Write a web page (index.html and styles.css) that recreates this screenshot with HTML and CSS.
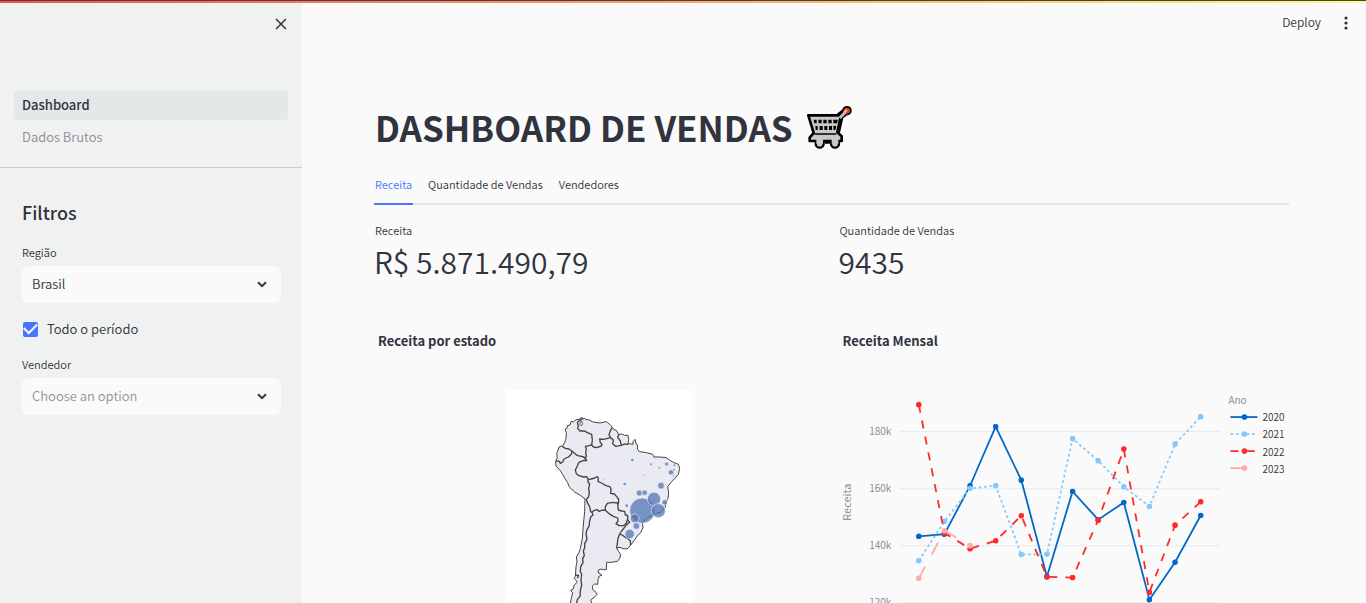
FILE: index.html
```html
<!DOCTYPE html>
<html lang="pt-BR">
<head>
<meta charset="utf-8">
<meta name="viewport" content="width=device-width, initial-scale=1">
<title>Dashboard de Vendas</title>
<link rel="stylesheet" href="styles.css">
</head>
<body>
<div class="decoration"></div>
<div class="app">
  <aside class="sidebar">
    <div class="sidebar-head">
      <button class="icon-button" type="button" aria-label="Fechar">
        <svg width="12" height="12" viewBox="0 0 12 12"><path d="M1 1l10 10M11 1L1 11" stroke="#31333f" stroke-width="1.5" fill="none"/></svg>
      </button>
    </div>
    <nav class="pages">
      <a class="page page-active" href="#dashboard">Dashboard</a>
      <a class="page" href="#dados">Dados Brutos</a>
    </nav>
    <section class="filters">
      <h2 class="filters-title">Filtros</h2>
      <label class="field-label" for="regiao">Região</label>
      <div class="select-box">
        <select id="regiao" class="select"><option>Brasil</option></select>
        <svg class="chevron" width="10" height="7" viewBox="0 0 10 7"><path d="M1 1.2l4 4 4-4" stroke="#31333f" stroke-width="2" fill="none"/></svg>
      </div>
      <label class="check"><input class="check-input" type="checkbox" checked><span>Todo o período</span></label>
      <label class="field-label" for="vendedor">Vendedor</label>
      <div class="select-box">
        <select id="vendedor" class="select select-empty"><option>Choose an option</option></select>
        <svg class="chevron" width="10" height="7" viewBox="0 0 10 7"><path d="M1 1.2l4 4 4-4" stroke="#31333f" stroke-width="2" fill="none"/></svg>
      </div>
    </section>
  </aside>

  <div class="content">
    <header class="toolbar">
      <button class="deploy" type="button">Deploy</button>
      <button class="icon-button" type="button" aria-label="Menu">
        <svg width="4" height="14" viewBox="0 0 4 14" fill="#31333f"><circle cx="2" cy="2" r="1.6"/><circle cx="2" cy="7" r="1.6"/><circle cx="2" cy="12" r="1.6"/></svg>
      </button>
    </header>
    <main class="main">
      <h1 class="title"><span>DASHBOARD DE VENDAS</span>
        <svg class="cart" width="46" height="44" viewBox="1344 50 138 132" aria-hidden="true">
          <g stroke="#000" stroke-linejoin="round" stroke-linecap="round">
            <path d="M1461 69L1443 83L1431 137" stroke-width="22" fill="none"/>
            <circle cx="1464" cy="67" r="14" fill="#000" stroke="none"/>
            <circle cx="1382" cy="166" r="12" fill="#c9c9c9" stroke-width="7"/>
            <circle cx="1428" cy="166" r="12" fill="#c9c9c9" stroke-width="7"/>
            <path d="M1348 81H1446L1435 132L1448 144V158H1352V148L1364 134Z" fill="#c9c9c9" stroke-width="8"/>
            <path d="M1368 137H1430" stroke-width="5"/>
          </g>
          <path d="M1372 150h20v16h-20zM1418 150h20v16h-20z" fill="#c9c9c9"/>
          <path d="M1395 158h20l-3 8h-14z" fill="#000"/>
          <path d="M1442 89L1461 70" stroke="#bdbdbd" stroke-width="9"/>
          <circle cx="1464" cy="67" r="9" fill="#f03a17"/>
          <path d="M1457 76l9-9-6-5-8 9z" fill="#e7b5ab"/>
          <g fill="#000">
            <path d="M1364 94h9v11h-7zM1378 94h10v11h-9zM1393 94h10v11h-10zM1408 94h10v11h-10zM1423 94h14l-3 11h-11z"/>
            <path d="M1369 113h7v12h-6zM1382 113h9v12h-9zM1396 113h9v12h-9zM1410 113h9v12h-9zM1423 113h9l-3 12h-6z"/>
          </g>
        </svg>
      </h1>
      <div class="tabs" role="tablist">
        <button class="tab tab-active" role="tab" aria-selected="true" type="button">Receita</button>
        <button class="tab" role="tab" type="button">Quantidade de Vendas</button>
        <button class="tab" role="tab" type="button">Vendedores</button>
      </div>
      <div class="columns">
        <section class="column">
          <div class="metric-label">Receita</div>
          <div class="metric-value">R$ 5.871.490,79</div>
          <h3 class="chart-title">Receita por estado</h3>
          <svg class="map" viewBox="18 15 558 810" role="img" aria-label="Receita por estado">
            <path d="M18 15h558v810H18z" fill="#fff"/>
            <g stroke="#444" stroke-linejoin="round">
              <path fill="#eaeaf2" stroke-width="3" d="M245 96L240 102L228 104L221 110L213 110L210 120L202 122L201 130L195 133L199 142L198 160L194 173L188 182L177 186L174 196L170 206L172 218L167 229L168 243L181 257L188 268L195 281L203 293L208 306L224 321L241 331L255 342L254 380L250 420L247 460L241 490L237 503L229 516L231 530L228 545L226 575L222 580L229 587L231 592L223 600L219 612L212 616L218 624L214 640L211 654L205 700L215 760L250 780L245 720L275 654L272 645L284 636L291 628L288 622L278 614L277 603L284 597L293 598L294 584L298 573L306 571L300 566L295 564L295 555L303 552L311 554L319 554L320 532L334 532L352 529L360 519L362 508L356 500L350 489L360 487L372 492L384 490L392 480L405 463L413 451L422 443L429 428L427 414L437 402L450 394L460 387L483 382L496 366L498 350L504 340L506 325L503 305L515 290L524 281L535 268L539 250L535 238L520 232L508 225L499 218L480 216L462 216L458 208L440 203L418 200L412 192L413 180L409 178L405 163L399 170L399 178L388 176L384 178L386 163L384 151L374 151L365 147L356 149L350 137L341 133L338 128L331 120L322 112L318 110L300 114L285 112L277 110L265 104L257 104L253 99L248 104Z"/>
              <g fill="none" stroke-width="4">
                <path d="M245 101L236 108L232 113L235 124L233 130L240 138L254 138L262 143L275 148L277 165L275 180L267 182L256 184L259 192L257 204L259 213L256 224"/>
                <path d="M187 184L196 190L207 192L216 198L227 208L234 212L252 216L260 227L251 226L237 232L232 243L226 255L229 266L237 272L250 276L260 275L265 284L263 290L269 297L266 310L268 325L265 337L259 342"/>
                <path d="M216 198L214 208L205 216L192 222L188 231L181 235L178 229L168 228"/>
                <path d="M265 284L274 282L284 279L292 275L295 280L294 289L304 294L318 302L329 305L333 311L332 325L343 327L352 337L356 344L355 358"/>
                <path d="M259 342L262 353L269 365L272 380L276 382L283 376L291 374L298 379L306 375L316 376L316 365L322 355L337 352L353 354L355 375L365 378L374 379L376 390L383 391L383 404L389 412L380 419L365 438L359 447"/>
                <path d="M316 376L326 385L340 394L353 399L354 408L348 416L357 422L370 422L379 415L382 404"/>
                <path d="M359 447L366 450L377 457L385 462L391 468L392 480M359 447L354 460L352 475L350 489"/>
                <path d="M276 382L279 390L272 396L269 408L267 424L261 434L258 446L261 463L254 476L254 488L250 498L253 512L248 520L249 533L242 545L241 560L245 567L243 585L245 600L241 618L240 634L232 644L230 654L228 700M225 570L236 571L232 580"/>
                <path d="M275 180L281 186L290 188L304 183L306 178L301 173L299 162L311 163L323 160L332 158L327 150L330 140L336 128M332 158L340 165L338 176L347 184L364 181M356 149L353 157L361 168L364 181L373 177L384 178"/>
                <path d="M243 106L239 118L244 123L248 116L244 107" stroke-width="2.5"/>
              </g>
            </g>
            <g fill="#4c72b0" fill-opacity=".72" stroke="#eaeaf2" stroke-width="2">
              <circle cx="427" cy="377" r="38"/><circle cx="462" cy="342" r="20"/><circle cx="475" cy="377" r="21"/><circle cx="404" cy="400" r="13"/><circle cx="389" cy="447" r="14"/><circle cx="409" cy="423" r="10"/><circle cx="483" cy="302" r="10"/><circle cx="418" cy="324" r="9"/><circle cx="434" cy="323" r="8"/><circle cx="494" cy="352" r="8"/><circle cx="513" cy="262" r="8"/><circle cx="500" cy="237" r="6"/>
            </g>
            <g fill="#7492c8">
              <circle cx="397" cy="225" r="4"/><circle cx="374" cy="297" r="4"/><circle cx="380" cy="362" r="4"/><circle cx="453" cy="238" r="3"/><circle cx="523" cy="241" r="3"/><circle cx="478" cy="248" r="2.5"/><circle cx="522" cy="254" r="2.5"/><circle cx="431" cy="271" r="2"/><circle cx="521" cy="272" r="2"/><circle cx="517" cy="281" r="1"/><circle cx="296" cy="223" r="1"/><circle cx="310" cy="282" r="1.5"/>
            </g>
          </svg>
        </section>
        <section class="column">
          <div class="metric-label">Quantidade de Vendas</div>
          <div class="metric-value">9435</div>
          <h3 class="chart-title">Receita Mensal</h3>
          <svg class="chart" viewBox="839 360 450 365" role="img" aria-label="Receita Mensal">
            <path d="M899 431.5h321M899 488.5h321M899 545.5h321M899 602.5h321M899 659.5h321" stroke="#e6eaf1"/>
            <g class="axis-text" text-anchor="end">
              <text x="891" y="435">180k</text><text x="891" y="492">160k</text><text x="891" y="549">140k</text><text x="891" y="606">120k</text><text x="891" y="663">100k</text>
            </g>
            <text class="axis-title" text-anchor="middle" transform="translate(851 502) rotate(-90)">Receita</text>
            <defs>
              <marker id="m20" markerUnits="userSpaceOnUse" markerWidth="6" markerHeight="6" refX="3" refY="3"><circle cx="3" cy="3" r="2.8" fill="#0068c9"/></marker>
              <marker id="m21" markerUnits="userSpaceOnUse" markerWidth="6" markerHeight="6" refX="3" refY="3"><circle cx="3" cy="3" r="2.8" fill="#83c9ff"/></marker>
              <marker id="m22" markerUnits="userSpaceOnUse" markerWidth="6" markerHeight="6" refX="3" refY="3"><circle cx="3" cy="3" r="2.8" fill="#ff2b2b"/></marker>
              <marker id="m23" markerUnits="userSpaceOnUse" markerWidth="6" markerHeight="6" refX="3" refY="3"><circle cx="3" cy="3" r="2.8" fill="#ffabab"/></marker>
            </defs>
            <polyline class="line line-2020" points="918.7,536.2 944.3,534 969.9,485.6 995.5,426.6 1021.1,480 1046.7,576.5 1072.3,491.3 1097.9,519.5 1123.5,502.3 1149.1,599.4 1174.7,562 1200.3,515.3"/>
            <polyline class="line line-2021" points="918.7,560.4 944.3,521.3 969.9,488.3 995.5,485.6 1021.1,554.3 1046.7,554 1072.3,438.6 1097.9,460.6 1123.5,486.6 1149.1,506.3 1174.7,444 1200.3,416.6"/>
            <polyline class="line line-2022" points="918.7,404.6 944.3,532.8 969.9,548.5 995.5,540.6 1021.1,515.6 1046.7,576.5 1072.3,577.3 1097.9,520 1123.5,449 1149.1,592 1174.7,525 1200.3,501.6"/>
            <polyline class="line line-2023" points="918.7,578 944.3,530.6 969.9,545.3"/>
            <text class="legend-title" x="1228" y="404">Ano</text>
            <path class="line line-2020 line-key" d="M1230 417h27"/><circle cx="1244" cy="417" r="2.8" fill="#0068c9"/>
            <path class="line line-2021 line-key" d="M1230 434h27"/><circle cx="1244" cy="434" r="2.8" fill="#83c9ff"/>
            <path class="line line-2022 line-key" d="M1230 451h27"/><circle cx="1244" cy="451" r="2.8" fill="#ff2b2b"/>
            <path class="line line-2023 line-key" d="M1230 468h27"/><circle cx="1244" cy="468" r="2.8" fill="#ffabab"/>
            <g class="legend-text"><text x="1262" y="421">2020</text><text x="1262" y="438">2021</text><text x="1262" y="456">2022</text><text x="1262" y="473">2023</text></g>
          </svg>
        </section>
      </div>
    </main>
  </div>
</div>
</body>
</html>
```
FILE: styles.css
```css
* { box-sizing: border-box; }

body {
  margin: 0;
  background: #fafafa;
  color: #31333f;
  font-family: "Noto Sans CJK SC", "Open Sans", sans-serif;
  font-size: 13px;
  font-weight: 350;
  line-height: 20px;
}

button, select { font: inherit; color: inherit; }
button { padding: 0; border: 0; background: none; cursor: pointer; }

.decoration {
  position: absolute;
  inset: 0 0 auto;
  height: 3px;
  border-top: 1px solid #444;
  background: linear-gradient(90deg, #ff4b4b, #fffd80) padding-box;
  z-index: 2;
}

.app { display: flex; height: 100vh; overflow: hidden; }

.sidebar { flex: 0 0 302px; background: #f0f2f1; }
.sidebar-head {
  display: flex;
  justify-content: flex-end;
  padding: 14px 11px 0 0;
  height: 91px;
}
.icon-button { width: 20px; height: 20px; display: grid; place-items: center; }

.pages {
  display: flex;
  flex-direction: column;
  gap: 3px;
  padding: 0 14px 15px;
  border-bottom: 1px solid #c9cccc;
}
.page {
  padding: 3px 8px 5px;
  border-radius: 4px;
  color: #8b8d95;
  line-height: 21px;
  text-decoration: none;
}
.page-active { background: #e4e8e8; color: #31333f; font-weight: 500; }

.filters { padding: 30px 21px 0 22px; }
.filters-title { margin: 0 0 18px; font-size: 18px; font-weight: 500; line-height: 28px; }
.field-label { display: block; margin-bottom: 6px; font-size: 11px; line-height: 16px; }
.select-box { display: grid; align-items: center; }
.select-box > * { grid-area: 1 / 1; }
.select {
  appearance: none;
  width: 100%;
  height: 37px;
  padding: 0 10px 2px;
  border: 0;
  border-radius: 7px;
  background: #fafafa;
}
.select-empty { color: #91939a; }
.chevron { justify-self: end; margin-right: 14px; pointer-events: none; }

.check { display: flex; align-items: center; gap: 9px; margin: 16px 0 17px 1px; }
.check-input {
  appearance: none;
  display: grid;
  place-items: center;
  width: 15px;
  height: 15px;
  margin: 0;
  border-radius: 2px;
  background: #4a74ff;
}
.check-input::after {
  content: "";
  width: 11px;
  height: 6px;
  margin-bottom: 4px;
  border: solid #fafafa;
  border-width: 0 0 2px 2px;
  transform: rotate(-45deg);
}

.content { flex: 1; min-width: 0; }
.toolbar {
  display: flex;
  justify-content: flex-end;
  align-items: center;
  gap: 15px;
  height: 45px;
  padding-right: 10px;
}
.deploy { padding-bottom: 2px; font-size: 12px; }

.main { padding: 56px 77px 0 73px; }
.title {
  display: flex;
  align-items: center;
  gap: 14px;
  margin: 0;
  padding-left: 1px;
  font-size: 35px;
  font-weight: 700;
  line-height: 52px;
}

.main { padding-left: 72px; }
.tabs { display: flex; gap: 14px; margin-top: 14px; border-bottom: 2px solid #e5e6e6; }
.tab { height: 38px; margin-bottom: -2px; padding: 0 1px 2px; border-bottom: 2px solid transparent; font-size: 11px; }
.tab-active { border-color: #4a74ff; color: #4a74ff; }

.columns { display: grid; grid-template-columns: repeat(2, minmax(0, 1fr)); gap: 14px; padding-top: 15px; }
.metric-label { padding-left: 1px; font-size: 11px; }
.metric-value { font-size: 30px; line-height: 42px; }
.chart-title { margin: 49px 4px 0; font-size: 13px; font-weight: 700; line-height: 20px; }

.map { display: block; width: 100%; max-width: 186px; margin: 39px auto 0; }
.chart { display: block; width: 100%; margin-top: 9px; overflow: visible; }

.line { fill: none; stroke-width: 1.8; }
.line-2020 { stroke: #0068c9; marker: url(#m20); }
.line-2021 { stroke: #83c9ff; stroke-dasharray: 2.7 2.7; marker: url(#m21); }
.line-2022 { stroke: #ff2b2b; stroke-dasharray: 8.1 8.1; marker: url(#m22); }
.line-2023 { stroke: #ffabab; stroke-dasharray: 13.5 13.5; marker: url(#m23); }
.line-key { marker: none; }

.axis-text { font-size: 10px; fill: #808495; }
.axis-title { font-size: 11px; fill: #808495; }
.legend-title { font-size: 10px; fill: #808495; }
.legend-text { font-size: 10px; fill: #31333f; }
```
